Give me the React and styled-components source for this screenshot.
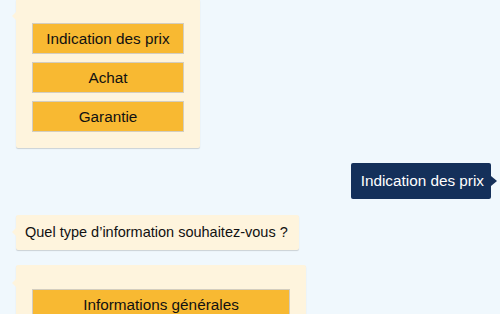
import styled, { createGlobalStyle } from "styled-components";

const GlobalStyle = createGlobalStyle`
  html, body {
    margin: 0;
    padding: 0;
    background: #f0f8fd;
    font-family: "Liberation Sans", Arial, Helvetica, sans-serif;
    overflow: hidden;
  }
`;

const Chat = styled.div`
  display: flex;
  flex-direction: column;
  align-items: flex-start;
  gap: 15px;
  padding: 0 9px 0 16px;
  margin-top: -1px;
`;

const BotBubble = styled.div`
  position: relative;
  background: #fef4dd;
  border-radius: 2px;
  box-shadow: 0 1px 1px rgba(0, 0, 0, 0.16);
  width: ${(p) => p.$width || "auto"};
  box-sizing: border-box;
  &::before {
    content: "";
    position: absolute;
    left: -4px;
    top: ${(p) => p.$arrowTop || "13px"};
    border-top: 4px solid transparent;
    border-bottom: 4px solid transparent;
    border-right: 4px solid #fef4dd;
  }
`;

const Message = styled(BotBubble)`
  padding: 9px 11px 9px 9px;
  font-size: 14.5px;
  line-height: 17px;
  color: #111;
`;

const Choices = styled(BotBubble)`
  display: flex;
  flex-direction: column;
  gap: 8px;
  padding: 24px 16px 16px 16px;
`;

const Choice = styled.button`
  height: 31px;
  width: 100%;
  background: #f8b932;
  border: 1px solid #d3cdbf;
  font-family: inherit;
  font-size: 15.3px;
  color: #111;
  padding: 0;
  cursor: pointer;
`;

const UserBubble = styled.div`
  position: relative;
  align-self: flex-end;
  margin-bottom: 1px;
  background: #14305a;
  color: #fff;
  border-radius: 2px;
  padding: 9px 7px 10px 10px;
  font-size: 15.3px;
  line-height: 17px;
  &::after {
    content: "";
    position: absolute;
    right: -6px;
    top: 13px;
    border-top: 5px solid transparent;
    border-bottom: 5px solid transparent;
    border-left: 6px solid #14305a;
  }
`;

function App() {
  return (
    <>
      <GlobalStyle />
      <Chat>
        <Choices $width="184px" $arrowTop="13px">
          <Choice>Indication des prix</Choice>
          <Choice>Achat</Choice>
          <Choice>Garantie</Choice>
        </Choices>
        <UserBubble>Indication des prix</UserBubble>
        <Message $arrowTop="13px">Quel type d’information souhaitez-vous ?</Message>
        <Choices $width="290px" $arrowTop="14px">
          <Choice>Informations générales</Choice>
          <Choice>Tarifs</Choice>
        </Choices>
      </Chat>
    </>
  );
}

export default App;
